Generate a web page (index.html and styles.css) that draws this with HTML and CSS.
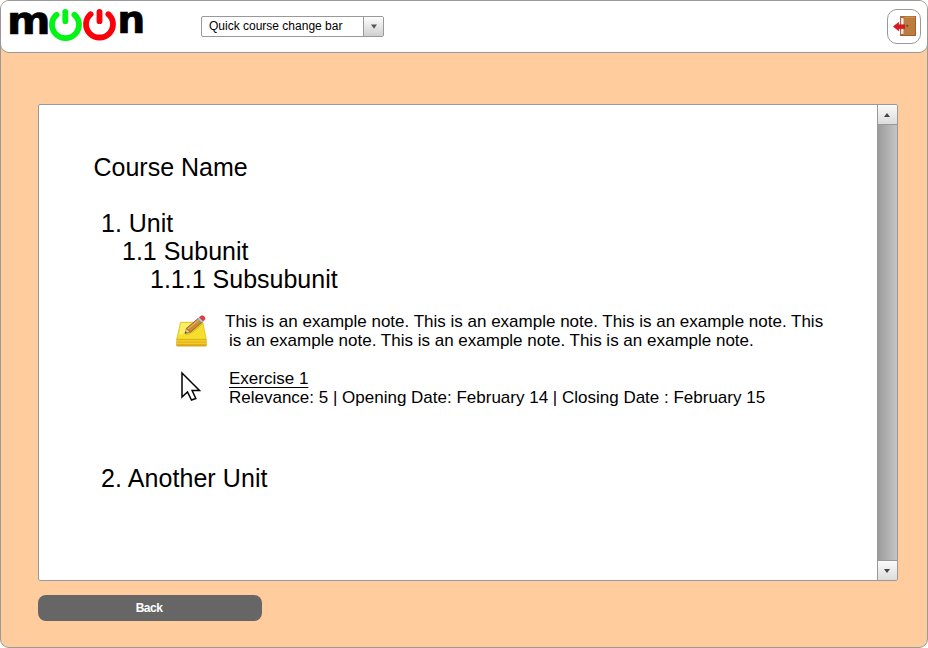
FILE: index.html
```html
<!DOCTYPE html>
<html lang="en">
<head>
<meta charset="utf-8">
<title>moon</title>
<link rel="stylesheet" href="styles.css">
</head>
<body>
<div class="app">
  <header class="topbar">
    <svg class="logo" width="142" height="45" viewBox="-2 -3 142 45" role="img" aria-label="moon">
      <text class="logo-text" x="1" y="30" textLength="43.500" lengthAdjust="spacingAndGlyphs">m</text>
      <g fill="none" stroke="#00f514" stroke-linecap="round">
        <path stroke-width="5.800" d="M50.600 10.800A13.500 13.300 0 1 0 68.400 10.800"/>
        <path stroke-width="5.800" d="M59.300 7.800V17.200"/>
      </g>
      <g fill="none" stroke="#fa0008" stroke-linecap="round">
        <path stroke-width="5.800" d="M84.600 10.200A13.500 13.300 0 1 0 102.400 10.200"/>
        <path stroke-width="5.800" d="M93.500 7.800V17.200"/>
      </g>
      <text class="logo-text" x="111.300" y="29" textLength="28" lengthAdjust="spacingAndGlyphs">n</text>
    </svg>
    <div class="combo">
      <span class="combo-value">Quick course change bar</span>
      <span class="combo-button"><svg width="6" height="5" viewBox="0 0 6 5"><path fill="#555" d="M0 .5h6L3 4.7z"/></svg></span>
    </div>
    <button class="exit" aria-label="Exit">
      <svg width="24" height="24" viewBox="0 0 24 24">
        <path fill="#a96a35" d="M7 1h16v20H7z"/>
        <path fill="#d9e3e6" d="M8 3h4v16H8z"/>
        <path fill="#f4f7f7" d="M9 4h2v12H9z"/>
        <path fill="#bc7b3f" d="M10.500 20.700V2.500L12 1.300h10.500v18.700z"/>
        <path fill="#cb8e50" d="M12 2h10v1H12z"/>
        <path fill="#9c602d" d="M22 1h1v20H8v-1h14z"/>
        <circle cx="14.300" cy="10.800" r="1" fill="#65401f"/>
        <path fill="#dc1720" stroke="#b91c20" stroke-width=".5" d="M0.300 11.500 5.800 7.300V9.700h6v4h-6v2.300z"/>
      </svg>
    </button>
  </header>

  <main class="panel">
    <div class="content">
      <h1 class="title">Course Name</h1>
      <h2 class="unit">1. Unit</h2>
      <h3 class="subunit">1.1 Subunit</h3>
      <h4 class="subsubunit">1.1.1 Subsubunit</h4>
      <div class="item note">
        <svg class="note-icon" width="34" height="34" viewBox="0 0 34 34">
          <path fill="#d9a813" d="M1.500 24.500h30l.3 7-1 1H2.200l-1-1z"/>
          <path fill="#f2c92f" d="M2 26h29.200v1.700H2zm0 2.500h29.200v1.700H2z"/>
          <path fill="#f5df2c" stroke="#d8b813" stroke-width=".7" d="M5.500 8.300h22.300l3.400 17H1.700z"/>
          <path fill="#fbee60" d="M6 9h13L8 20l-4 1z"/>
          <path fill="#ae9718" opacity=".4" d="m10 21 11-8 6-6 .8 3-9 8-6 3z"/>
          <path fill="#e5c190" stroke="#77502a" stroke-width=".5" d="m10 19.500 1.500-5.200 4 3.700z"/>
          <path fill="#c98a3c" stroke="#875019" stroke-width=".7" d="M11.500 14.300 23 4.500l3.800 3.800L15.500 18z"/>
          <path stroke="#edbc78" stroke-width="1" d="m13 15 11.300-9.500"/>
          <path fill="#b9c5cb" stroke="#6b777d" stroke-width=".4" d="m22.500 4.900 2-1.700 3.800 3.700-2 1.700z"/>
          <path fill="#e63b3e" stroke="#b52026" stroke-width=".5" d="m24.500 3.200 1.600-1.300q1.500-.7 3 .7t.7 3L28.300 7z"/>
          <path fill="#222" d="m10 19.500.5-1.800 1.300 1.100z"/>
        </svg>
        <p class="text">This is an example note. This is an example note. This is an example note. This<br><span class="hang">is an example note. This is an example note. This is an example note.</span></p>
      </div>
      <div class="item exercise">
        <svg class="cursor-icon" width="22" height="32" viewBox="0 0 22 32">
          <path fill="#fff" stroke="#000" stroke-width="1.500" d="M2 2v24l5.500-5 4 8 4.300-1.500-3.700-8H19.500z"/>
        </svg>
        <p class="text"><a class="link">Exercise 1</a><br>Relevance: 5 | Opening Date: February 14 | Closing Date : February 15</p>
      </div>
      <h2 class="unit next">2. Another Unit</h2>
    </div>
    <div class="scrollbar">
      <span class="arrow up"><svg width="6" height="4" viewBox="0 0 6 4"><path fill="#444" d="M0 4h6L3 0z"/></svg></span>
      <span class="arrow down"><svg width="6" height="4" viewBox="0 0 6 4"><path fill="#444" d="M0 0h6L3 4z"/></svg></span>
    </div>
  </main>
  <button class="back">Back</button>
</div>
</body>
</html>
```

FILE: styles.css
```css
* { box-sizing: border-box; }

body {
  margin: 0;
  background: #fff;
  color: #000;
  font-family: "Liberation Sans", Arial, sans-serif;
}

.app {
  height: 648px;
  background: #ffcc9d;
  border: 1px solid #999;
  border-radius: 9px;
  overflow: hidden;
}

.topbar {
  display: flex;
  align-items: flex-start;
  height: 53px;
  margin: -1px -1px 0;
  padding: 0 6px 0 3px;
  background: #fff;
  border: 1px solid #999;
  border-radius: 0 0 9px 9px;
}

.logo { flex: none; overflow: visible; }

.logo-text {
  font: bold 37px "DejaVu Sans", sans-serif;
  stroke: #000;
  stroke-width: .7px;
}

.combo {
  display: flex;
  width: 183px;
  height: 21px;
  margin: 15px 0 0 55px;
  border: 1px solid #999;
  border-radius: 2px;
  font-size: 12px;
  line-height: 19px;
}

.combo-value {
  flex: 1;
  padding-left: 7px;
  white-space: nowrap;
}

.combo-button {
  display: flex;
  align-items: center;
  justify-content: center;
  width: 20px;
  border-left: 1px solid #999;
  background: linear-gradient(#fdfdfd, #d0d0d0);
}

.exit {
  display: flex;
  align-items: center;
  justify-content: center;
  width: 34px;
  height: 35px;
  margin: 8px 0 0 auto;
  padding: 0 0 0 2px;
  background: #fff;
  border: 1px solid #999;
  border-radius: 10px;
}

.panel {
  display: flex;
  width: 860px;
  height: 477px;
  margin: 51px 0 0 37px;
  background: #fff;
  border: 1px solid #999;
  border-radius: 2px;
  overflow: hidden;
}

.content {
  flex: 1;
  padding: 48px 0 0 54px;
}

.title, .unit, .subunit, .subsubunit {
  margin: 0;
  font-size: 25px;
  font-weight: normal;
  line-height: 28px;
}

.title { padding-left: 0.5px; }
.unit { margin: 28px 0 0 8px; }
.subunit { margin-left: 29px; }
.subsubunit { margin-left: 57px; }

.item {
  display: flex;
  align-items: flex-start;
}

.note { margin: 19px 0 0 82px; }
.note-icon { margin: 2px 16px 0 0; }

.exercise { margin: 19px 0 0 87px; }
.cursor-icon { margin: 2px 27px 0 0; }

.text {
  margin: 0;
  font-size: 17px;
  line-height: 19px;
  white-space: nowrap;
}

.hang { margin-left: 4px; }

.link {
  text-decoration: underline;
  text-decoration-thickness: 1px;
  text-underline-offset: 3px;
}

.unit.next {
  margin-top: 57px;
  letter-spacing: 0.08px;
}

.scrollbar {
  display: flex;
  flex-direction: column;
  justify-content: space-between;
  width: 20px;
  background: linear-gradient(90deg, #999, #c4c4c4);
}

.arrow {
  display: flex;
  align-items: center;
  justify-content: center;
  height: 20px;
  padding-right: 1px;
  border-left: 1px solid #999;
  background: linear-gradient(#fafafa, #dcdcdc);
}

.up { border-bottom: 1px solid #999; }
.down { border-top: 1px solid #999; }

.back {
  display: block;
  width: 224px;
  height: 26px;
  margin: 14px 0 0 37px;
  padding: 0 2px 0 0;
  background: #666;
  border: 0;
  border-radius: 8px;
  color: #fff;
  font: bold 12px "Liberation Sans", Arial, sans-serif;
  letter-spacing: -0.5px;
}
```
